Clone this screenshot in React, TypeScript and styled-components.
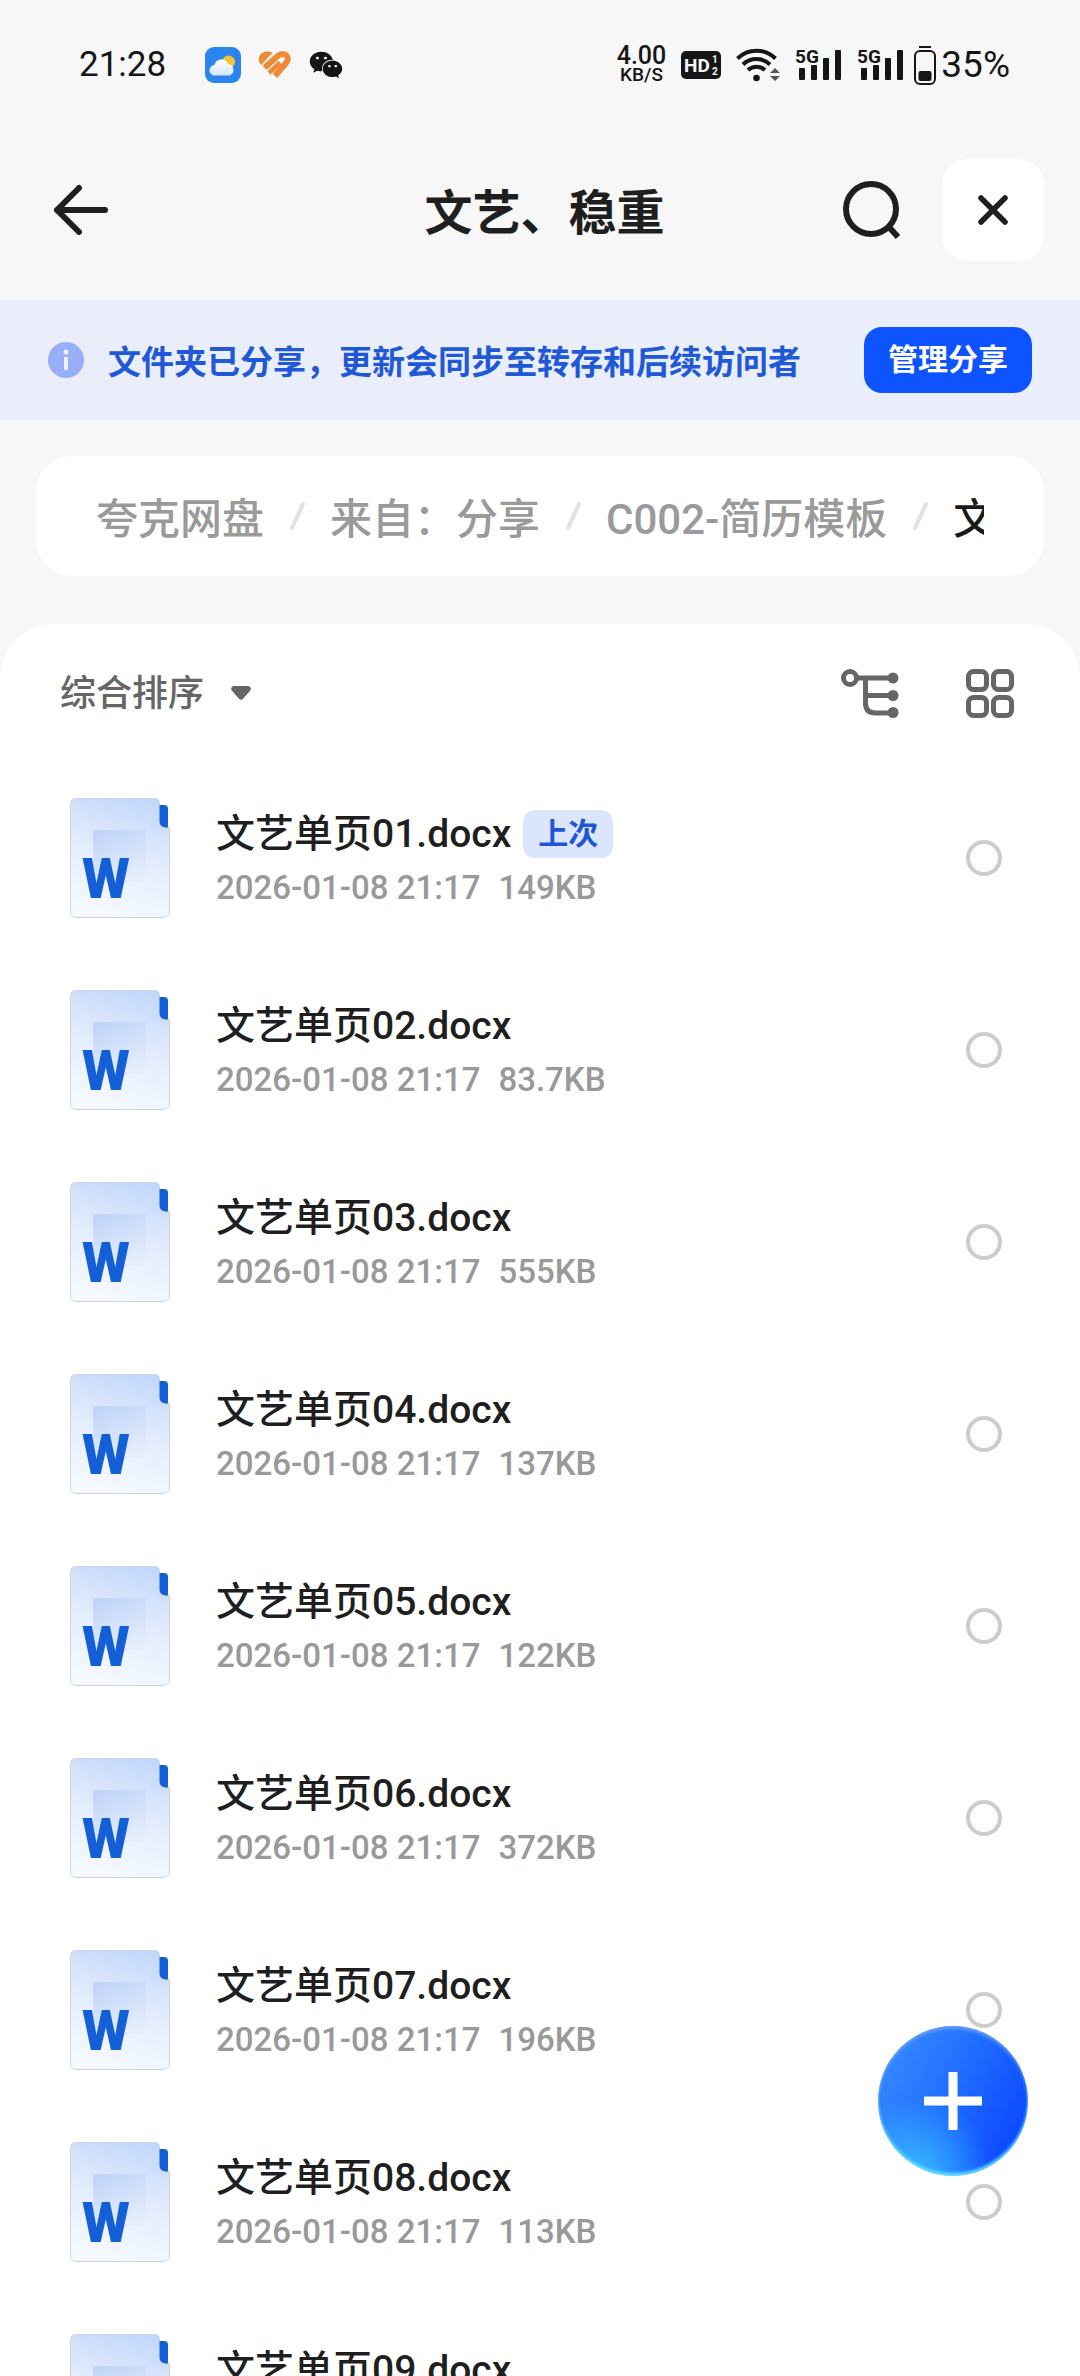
import React, { useState } from 'react';
import styled, { createGlobalStyle } from 'styled-components';
import { FaWeixin } from 'react-icons/fa';

const GlobalStyle = createGlobalStyle`
  *, *::before, *::after { box-sizing: border-box; }
  body {
    margin: 0;
    background: #f7f7f7;
    color: #1f1f1f;
    font-family: Roboto, "Noto Sans CJK SC", sans-serif;
  }
  button, select, input { font: inherit; color: inherit; margin: 0; }
  button { border: 0; padding: 0; background: none; cursor: pointer; }
  a { color: inherit; text-decoration: none; }
  svg { display: block; flex: none; }
`;

const Screen = styled.div`
  position: relative;
  display: flex;
  flex-direction: column;
  height: 100vh;
  overflow: hidden;
`;

const StatusBar = styled.div`
  display: flex;
  align-items: center;
  justify-content: space-between;
  height: 130px;
  padding: 0 70px 0 79px;
  color: #161616;
`;

const StatusGroup = styled.div<{ $gap: number }>`
  display: flex;
  align-items: center;
  gap: ${(p) => p.$gap}px;
`;

const StatusText = styled.span`
  font-size: 37px;
  line-height: 40px;
`;

const Clock = styled.span`
  margin-right: 22px;
  font-size: 35px;
  line-height: 40px;
`;

const Battery = styled.span`
  display: flex;
  align-items: center;
  gap: 5px;
`;

const Speed = styled.span`
  display: flex;
  flex-direction: column;
  align-items: center;
  font-size: 25px;
  font-weight: 500;
  line-height: 20px;
  small { font-size: 19px; line-height: 18px; }
`;

const Header = styled.header`
  display: grid;
  grid-template-columns: 1fr auto 1fr;
  align-items: center;
  height: 170px;
  padding: 0 36px 10px 45px;
`;

const Title = styled.h1`
  margin: 0;
  padding-top: 8px;
  font-size: 48px;
  line-height: 60px;
  font-weight: 700;
`;

const HeaderActions = styled.div`
  display: flex;
  align-items: center;
  justify-content: flex-end;
  gap: 36px;
`;

const IconButton = styled.button`
  display: flex;
  align-items: center;
  justify-content: center;
  width: 72px;
  height: 72px;
`;

const CloseButton = styled(IconButton)`
  width: 102px;
  height: 102px;
  border-radius: 26px;
  background: #fff;
`;

const Banner = styled.section`
  display: flex;
  align-items: center;
  height: 120px;
  padding: 0 48px;
  background: #eaeefb;
`;

const BannerText = styled.p`
  flex: 1;
  margin: 0 0 0 24px;
  padding-top: 6px;
  color: #2058d8;
  font-size: 33px;
  line-height: 48px;
  font-weight: 700;
  white-space: nowrap;
`;

const ManageButton = styled.button`
  flex: none;
  height: 66px;
  padding: 0 24px 6px;
  border-radius: 18px;
  background: #0d53ff;
  color: #fff;
  font-size: 30px;
  font-weight: 700;
`;

const Crumbs = styled.nav`
  margin: 36px 36px 48px;
  padding: 0 60px;
  border-radius: 36px;
  background: #fff;
`;

const CrumbList = styled.ol`
  display: flex;
  align-items: center;
  height: 120px;
  margin: 0;
  padding: 0;
  overflow: hidden;
  list-style: none;
`;

const Crumb = styled.li<{ $current?: boolean }>`
  display: flex;
  flex: none;
  align-items: center;
  color: ${(p) => (p.$current ? '#1a1a1a' : '#9a9a9a')};
  font-size: 42px;
  line-height: 60px;
  font-weight: 500;
  white-space: nowrap;
  a, span { padding-top: 8px; }
  svg { margin: 0 25px; }
`;

const Panel = styled.main`
  flex: 1;
  min-height: 0;
  overflow: hidden;
  border-radius: 54px 54px 0 0;
  background: #fff;
`;

const Toolbar = styled.div`
  display: flex;
  align-items: center;
  height: 138px;
  padding: 0 54px 0 60px;
  color: #666;
`;

const SortField = styled.label`
  display: flex;
  align-items: center;
  margin-right: auto;
  svg { margin-left: -20px; pointer-events: none; }
`;

const SortSelect = styled.select`
  appearance: none;
  padding: 2px 46px 0 0;
  border: 0;
  background: none;
  font-size: 36px;
  line-height: 48px;
  font-weight: 500;
`;

const ViewButtons = styled.div`
  display: flex;
  gap: 48px;
`;

const FileList = styled.ul`
  margin: 0;
  padding: 0;
  list-style: none;
`;

const FileRow = styled.li`
  display: flex;
  align-items: center;
  height: 192px;
  padding: 0 78px 0 70px;
`;

const FileInfo = styled.label`
  display: flex;
  flex: 1;
  flex-direction: column;
  gap: 6px;
  margin-left: 46px;
  padding-top: 6px;
`;

const FileName = styled.span`
  display: flex;
  align-items: center;
  gap: 12px;
  height: 48px;
  font-size: 39px;
  line-height: 48px;
  font-weight: 500;
`;

const Tag = styled.span`
  padding: 0 15px;
  border-radius: 12px;
  background: #dbe5fe;
  color: #1f55d6;
  font-size: 30px;
  font-weight: 700;
`;

const FileMeta = styled.span`
  display: flex;
  gap: 18px;
  color: #999;
  font-size: 33px;
  line-height: 48px;
  font-weight: 500;
`;

const Check = styled.input`
  appearance: none;
  flex: none;
  width: 36px;
  height: 36px;
  border: 4px solid #ccc;
  border-radius: 50%;
  &:checked { border: 10px solid #0d53ff; }
`;

const AddButton = styled.button`
  position: absolute;
  right: 52px;
  bottom: 200px;
  display: flex;
  align-items: center;
  justify-content: center;
  width: 150px;
  height: 150px;
  border-radius: 50%;
  background:
    radial-gradient(circle at 24% 100%, #38bdff 0%, rgba(56, 189, 255, 0) 42%),
    linear-gradient(118deg, #3384ff 15%, #1f6aff 50%, #0d4bff 85%);
  box-shadow: inset 0 -3px 3px #5fdcff, inset 0 3px 3px rgba(120, 170, 240, 0.7);
`;

function WeatherIcon() {
  return (
    <svg width="36" height="36" viewBox="0 0 36 36" aria-hidden="true">
      <defs>
        <linearGradient id="cloud" x1="0" y1="0" x2="0" y2="1">
          <stop offset="0" stopColor="#fff" />
          <stop offset="1" stopColor="#d3e6fb" />
        </linearGradient>
      </defs>
      <rect width="36" height="36" rx="9" fill="#2a86ee" />
      <circle cx="23.500" cy="15" r="6.500" fill="#f9c338" />
      <path d="M10 28.500a5.200 5.200 0 0 1-.6-10.400 7.200 7.200 0 0 1 13.700-1.200 6 6 0 0 1 1.400 11.600z" fill="url(#cloud)" />
    </svg>
  );
}

function HealthIcon() {
  return (
    <svg width="34" height="29" viewBox="0 0 34 29" fill="none" aria-hidden="true">
      <path d="M14.500 1.800C10-1 1 .2.800 8.300c0 2.400.8 4.200 2.400 5.700z" fill="#ee8a33" />
      <path d="M6.500 16.800 20 4.800c6-5 13 1.500 8.200 7L17 25" stroke="#ee8a33" strokeWidth="6" />
      <path d="M11 22 22 11.500" stroke="#ee8a33" strokeWidth="4.500" />
    </svg>
  );
}

function HdIcon() {
  return (
    <svg width="40" height="28" viewBox="0 0 40 28" aria-hidden="true">
      <rect width="40" height="28" rx="5" fill="#161616" />
      <g fill="#f7f7f7" fontFamily="Roboto, sans-serif" fontWeight="700">
        <text x="3" y="21" fontSize="19">HD</text>
        <text x="31" y="12" fontSize="10">1</text>
        <text x="31" y="24" fontSize="10">2</text>
      </g>
    </svg>
  );
}

function WifiIcon() {
  return (
    <svg width="44" height="36" viewBox="0 0 44 36" fill="none" aria-hidden="true">
      <g stroke="#161616" strokeWidth="4">
        <path d="M1.500 11.500a27 27 0 0 1 38 0" />
        <path d="M7 17.500a19.500 19.500 0 0 1 27 0" />
        <path d="M12 23a12.500 12.500 0 0 1 17 0" />
      </g>
      <circle cx="20.500" cy="31" r="3.300" fill="#161616" />
      <path d="M34 26l5-5 5 5zM34 29h10l-5 5z" fill="#555" />
    </svg>
  );
}

function SignalIcon() {
  return (
    <svg width="47" height="44" viewBox="0 -4 47 44" aria-hidden="true">
      <g fill="#161616">
        <text x="0" y="16" fontSize="19" fontWeight="700" fontFamily="Roboto, sans-serif">5G</text>
        <rect x="4" y="21" width="6" height="12" rx="1" />
        <rect x="16" y="18" width="6" height="15" rx="1" />
        <rect x="28" y="11" width="6" height="22" rx="1" />
        <rect x="40" y="3" width="6" height="30" rx="1" />
      </g>
    </svg>
  );
}

function BatteryIcon() {
  return (
    <svg width="22" height="39" viewBox="0 0 22 39" aria-hidden="true">
      <rect x="5" y="0" width="12" height="2" fill="#161616" />
      <rect x="1" y="5" width="20" height="33" rx="5" fill="none" stroke="#161616" strokeWidth="2" />
      <rect x="4.500" y="25" width="13" height="10" rx="2" fill="#161616" />
    </svg>
  );
}

function BackIcon() {
  return (
    <svg width="56" height="52" viewBox="0 0 56 52" fill="none" stroke="#1f1f1f" strokeWidth="6" strokeLinecap="round" strokeLinejoin="round" aria-hidden="true">
      <path d="M26 4 4 26l22 22M4 26h48" />
    </svg>
  );
}

function SearchIcon() {
  return (
    <svg width="60" height="60" viewBox="0 0 60 60" fill="none" stroke="#1f1f1f" strokeWidth="6" aria-hidden="true">
      <circle cx="31" cy="29" r="25" />
      <path d="m48 46 10 11" />
    </svg>
  );
}

function CloseIcon() {
  return (
    <svg width="32" height="32" viewBox="0 0 32 32" fill="none" stroke="#1f1f1f" strokeWidth="5.500" strokeLinecap="round" aria-hidden="true">
      <path d="m4 4 24 24M28 4 4 28" />
    </svg>
  );
}

function InfoIcon() {
  return (
    <svg width="36" height="36" viewBox="0 0 36 36" aria-hidden="true">
      <circle cx="18" cy="18" r="18" fill="#98aff8" />
      <circle cx="18" cy="10" r="2.500" fill="#eef2fd" />
      <rect x="16" y="15" width="4" height="13" rx="1" fill="#eef2fd" />
    </svg>
  );
}

function SlashIcon() {
  return (
    <svg width="16" height="30" viewBox="0 0 16 30" aria-hidden="true">
      <path d="M14 3 3 27" stroke="#e2e2e2" strokeWidth="4" strokeLinecap="round" />
    </svg>
  );
}

function CaretIcon() {
  return (
    <svg width="20" height="14" viewBox="0 0 20 14" aria-hidden="true">
      <path d="M2.500 0h15q3.500 1 1.800 4.500L12 12.800q-2 1.800-4 0L.7 4.500Q-1 1 2.500 0z" fill="#666" />
    </svg>
  );
}

function TreeIcon() {
  return (
    <svg width="58" height="50" viewBox="0 0 58 50" fill="none" stroke="#666" strokeWidth="5" aria-hidden="true">
      <circle cx="9" cy="10" r="6.500" />
      <path d="M16 10h36M24.500 10v25q0 10 10 10H52M24.500 27.500H52" />
      <g fill="#666" stroke="none">
        <circle cx="52" cy="10" r="5.500" />
        <circle cx="52" cy="27.500" r="5.500" />
        <circle cx="52" cy="44.500" r="5.500" />
      </g>
    </svg>
  );
}

function GridIcon() {
  return (
    <svg width="48" height="50" viewBox="0 0 48 50" fill="none" stroke="#666" strokeWidth="5" aria-hidden="true">
      <rect x="2.500" y="3.500" width="18" height="18" rx="5" />
      <rect x="27.500" y="3.500" width="18" height="18" rx="5" />
      <rect x="2.500" y="29.500" width="18" height="18" rx="5" />
      <rect x="27.500" y="29.500" width="18" height="18" rx="5" />
    </svg>
  );
}

function WordIcon() {
  return (
    <svg width="100" height="120" viewBox="0 0 100 120" aria-hidden="true">
      <defs>
        <linearGradient id="sheet" x1="0.700" y1="0" x2="0.450" y2="1">
          <stop offset="0" stopColor="#c3d7fa" />
          <stop offset="0.500" stopColor="#e4edfd" />
          <stop offset="1" stopColor="#f5f9ff" />
        </linearGradient>
        <linearGradient id="square" x1="0.300" y1="0" x2="0.700" y2="1">
          <stop offset="0" stopColor="#c2d5f7" />
          <stop offset="1" stopColor="#e6eefd" />
        </linearGradient>
      </defs>
      <path d="M6 .5h78q5.500 0 5.500 5.500v16q0 6 6 7h4V113q0 6.500-6.500 6.500H6Q.5 119.500.5 114V6Q.5.500 6 .500z" fill="url(#sheet)" stroke="#ccd6e8" />
      <path d="M89.500 7H94q4 0 4 4v18.500h-3q-5.500-1-5.500-6z" fill="#155fd6" />
      <rect x="23" y="32" width="53" height="52" fill="url(#square)" />
      <text x="12" y="100" fontFamily="Roboto, sans-serif" fontSize="55" fontWeight="900" fill="#155fd6">W</text>
    </svg>
  );
}

function PlusIcon() {
  return (
    <svg width="58" height="58" viewBox="0 0 58 58" aria-hidden="true">
      <path d="M29 0v58M0 29h58" stroke="#fff" strokeWidth="9" />
    </svg>
  );
}

const crumbs = ['夸克网盘', '来自：分享', 'C002-简历模板', '文艺、稳重'];

const files = [
  { name: '文艺单页01.docx', size: '149KB', recent: true },
  { name: '文艺单页02.docx', size: '83.7KB' },
  { name: '文艺单页03.docx', size: '555KB' },
  { name: '文艺单页04.docx', size: '137KB' },
  { name: '文艺单页05.docx', size: '122KB' },
  { name: '文艺单页06.docx', size: '372KB' },
  { name: '文艺单页07.docx', size: '196KB' },
  { name: '文艺单页08.docx', size: '113KB' },
  { name: '文艺单页09.docx', size: '128KB' },
];

export default function App() {
  const [selected, setSelected] = useState<string[]>([]);
  const toggle = (name: string) =>
    setSelected((s) => (s.includes(name) ? s.filter((n) => n !== name) : [...s, name]));

  return (
    <Screen>
      <GlobalStyle />
      <StatusBar>
        <StatusGroup $gap={17}>
          <Clock>21:28</Clock>
          <WeatherIcon />
          <HealthIcon />
          <FaWeixin size={34} />
        </StatusGroup>
        <StatusGroup $gap={15}>
          <Speed>
            4.00
            <small>KB/S</small>
          </Speed>
          <HdIcon />
          <WifiIcon />
          <SignalIcon />
          <StatusGroup $gap={10}>
            <SignalIcon />
            <Battery>
              <BatteryIcon />
              <StatusText>35%</StatusText>
            </Battery>
          </StatusGroup>
        </StatusGroup>
      </StatusBar>

      <Header>
        <IconButton type="button" aria-label="返回"><BackIcon /></IconButton>
        <Title>文艺、稳重</Title>
        <HeaderActions>
          <IconButton type="button" aria-label="搜索"><SearchIcon /></IconButton>
          <CloseButton type="button" aria-label="关闭"><CloseIcon /></CloseButton>
        </HeaderActions>
      </Header>

      <Banner>
        <InfoIcon />
        <BannerText>文件夹已分享，更新会同步至转存和后续访问者</BannerText>
        <ManageButton type="button">管理分享</ManageButton>
      </Banner>

      <Crumbs aria-label="路径">
        <CrumbList>
          {crumbs.map((label, i) => {
            const current = i === crumbs.length - 1;
            return (
              <Crumb key={label} $current={current}>
                {current ? <span aria-current="page">{label}</span> : <a href="#">{label}</a>}
                {!current && <SlashIcon />}
              </Crumb>
            );
          })}
        </CrumbList>
      </Crumbs>

      <Panel>
        <Toolbar>
          <SortField>
            <SortSelect aria-label="排序方式">
              <option>综合排序</option>
            </SortSelect>
            <CaretIcon />
          </SortField>
          <ViewButtons>
            <IconButton type="button" aria-label="目录树"><TreeIcon /></IconButton>
            <IconButton type="button" aria-label="网格视图"><GridIcon /></IconButton>
          </ViewButtons>
        </Toolbar>
        <FileList>
          {files.map((file, i) => (
            <FileRow key={file.name}>
              <WordIcon />
              <FileInfo htmlFor={`file-${i}`}>
                <FileName>
                  {file.name}
                  {file.recent && <Tag>上次</Tag>}
                </FileName>
                <FileMeta>
                  <span>2026-01-08 21:17</span>
                  <span>{file.size}</span>
                </FileMeta>
              </FileInfo>
              <Check
                id={`file-${i}`}
                type="checkbox"
                checked={selected.includes(file.name)}
                onChange={() => toggle(file.name)}
              />
            </FileRow>
          ))}
        </FileList>
      </Panel>

      <AddButton type="button" aria-label="新建"><PlusIcon /></AddButton>
    </Screen>
  );
}
